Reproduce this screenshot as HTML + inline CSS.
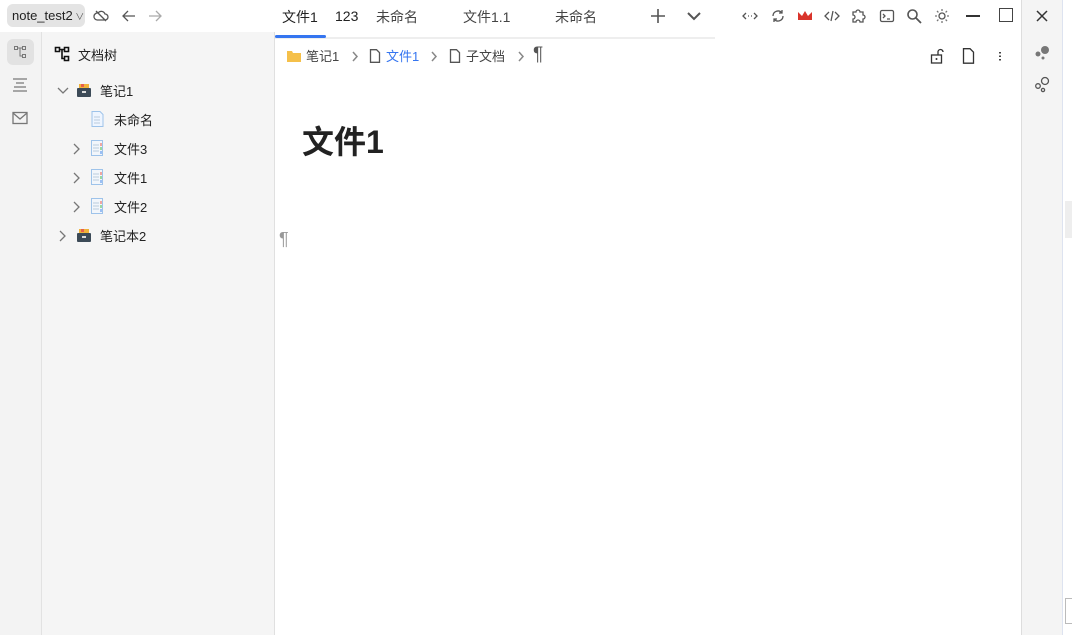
<!DOCTYPE html>
<html><head><meta charset="utf-8"><style>
*{box-sizing:border-box;margin:0;padding:0}
body{width:1072px;height:635px;overflow:hidden;background:#fff;font-family:"Liberation Sans","Noto Sans CJK SC",sans-serif;font-size:13px;color:#222;position:relative}
.a{position:absolute}
.ic{stroke:#555;fill:none;stroke-width:1.3}
</style></head><body>
<div class="a" style="left:0;top:32px;width:42px;height:603px;background:#f3f3f3;border-right:1px solid #e2e2e2"></div>
<div class="a" style="left:42px;top:32px;width:233px;height:603px;background:#f5f5f5;border-right:1px solid #e0e0e0"></div>
<div class="a" style="left:1021px;top:0;width:42px;height:635px;background:#f4f4f4;border-left:1px solid #ddd;border-right:1px solid #dde3f0"></div>
<div class="a" style="left:1065px;top:201px;width:7px;height:37px;background:#eee"></div>
<div class="a" style="left:1065px;top:598px;width:7px;height:26px;border:1px solid #bbb;border-right:none;background:#fff"></div>
<div class="a" style="left:7px;top:4px;width:78px;height:23px;background:#e4e4e4;border-radius:6px;font-size:13px;line-height:23px;padding-left:5px">note_test2<span style="font-size:9px;color:#555"> ∨</span></div>
<svg class="a" style="left:93px;top:8px" width="16" height="16" viewBox="0 0 16 16"><path class="ic" d="M4 12h8a3 3 0 0 0 0-6 4 4 0 0 0-7-1 3 3 0 0 0-1 7M3 3l10 10"/></svg>
<svg class="a" style="left:121px;top:8px" width="16" height="16" viewBox="0 0 16 16"><path class="ic" d="M14 8H2M7 3L2 8l5 5"/></svg>
<svg class="a" style="left:147px;top:8px" width="16" height="16" viewBox="0 0 16 16"><path class="ic" style="stroke:#aaa" d="M2 8h12M9 3l5 5-5 5"/></svg>
<div class="a" style="left:275px;top:37px;width:440px;height:2px;background:#eee"></div>
<div class="a" style="left:275px;top:35px;width:51px;height:3px;background:#3575f0;border-radius:2px"></div>
<div class="a" style="left:282px;top:7px;font-size:14px">文件1</div>
<div class="a" style="left:335px;top:8px;font-size:14px">123</div>
<div class="a" style="left:376px;top:7px;font-size:14px;color:#444">未命名</div>
<div class="a" style="left:463px;top:7px;font-size:14px;color:#444">文件1.1</div>
<div class="a" style="left:555px;top:7px;font-size:14px;color:#444">未命名</div>
<svg class="a" style="left:650px;top:8px" width="16" height="16" viewBox="0 0 16 16"><path class="ic" style="stroke-width:1.6" d="M8 1v14M1 8h14"/></svg>
<svg class="a" style="left:686px;top:8px" width="16" height="16" viewBox="0 0 16 16"><path class="ic" style="stroke-width:2" d="M2 5l6 6 6-6"/></svg>
<svg class="a" style="left:742px;top:9px" width="16" height="14" viewBox="0 0 16 14"><path class="ic" d="M4 4L1 7l3 3M12 4l3 3-3 3M6 7h1M9 7h1"/></svg>
<svg class="a" style="left:770px;top:8px" width="16" height="16" viewBox="0 0 16 16"><path class="ic" d="M3 8a5 5 0 0 1 9-3M13 8a5 5 0 0 1-9 3M12 2v3H9M4 14v-3h3"/></svg>
<svg class="a" style="left:797px;top:9px" width="16" height="14" viewBox="0 0 16 14"><path fill="#d9342b" d="M1 3l4 4 3-5 3 5 4-4v8H1z"/></svg>
<svg class="a" style="left:824px;top:8px" width="16" height="16" viewBox="0 0 16 16"><path class="ic" d="M5 4L1 8l4 4M11 4l4 4-4 4M9 3L7 13"/></svg>
<svg class="a" style="left:851px;top:7px" width="16" height="17" viewBox="0 0 16 17"><path class="ic" d="M2 5h3a2 2 0 1 1 4 0h3v3a2 2 0 1 1 0 4v3H9a2 2 0 1 0-4 0H2v-3a2 2 0 1 0 0-4z"/></svg>
<svg class="a" style="left:879px;top:8px" width="16" height="16" viewBox="0 0 16 16"><rect class="ic" x="1.5" y="2.5" width="13" height="11" rx="1.5"/><path class="ic" d="M4 6l2 2-2 2M8 11h3"/></svg>
<svg class="a" style="left:906px;top:8px" width="16" height="16" viewBox="0 0 16 16"><circle class="ic" style="stroke-width:1.6" cx="6.5" cy="6.5" r="4.5"/><path class="ic" style="stroke-width:1.8" d="M10 10l5 5"/></svg>
<svg class="a" style="left:934px;top:8px" width="16" height="16" viewBox="0 0 16 16"><circle class="ic" cx="8" cy="8" r="3"/><path class="ic" style="stroke:#777" d="M8 1v2M8 13v2M1 8h2M13 8h2M3 3l1.4 1.4M11.6 11.6L13 13M3 13l1.4-1.4M11.6 4.4L13 3"/></svg>
<div class="a" style="left:966px;top:15px;width:14px;height:1.5px;background:#333"></div>
<div class="a" style="left:999px;top:8px;width:14px;height:14px;border:1px solid #444"></div>
<svg class="a" style="left:1035px;top:9px" width="14" height="14" viewBox="0 0 14 14"><path class="ic" style="stroke:#333;stroke-width:1.5" d="M2 2l10 10M12 2L2 12"/></svg>
<svg class="a" style="left:1033px;top:43px" width="18" height="18" viewBox="0 0 18 18"><circle fill="#777" cx="12" cy="7" r="4"/><circle fill="#777" cx="5" cy="11" r="2.5"/><circle fill="#777" cx="10" cy="15" r="1.5"/></svg>
<svg class="a" style="left:1033px;top:75px" width="18" height="18" viewBox="0 0 18 18"><circle class="ic" cx="12" cy="6" r="3.5"/><circle class="ic" cx="5" cy="11" r="2.3"/><circle class="ic" cx="10" cy="15" r="1.6"/></svg>
<div class="a" style="left:7px;top:39px;width:27px;height:26px;background:#e2e2e2;border-radius:6px"></div>
<svg class="a" style="left:13px;top:45px" width="14" height="14" viewBox="0 0 14 14"><path class="ic" style="stroke:#777;stroke-width:1" d="M1.5 1.5h3v3h-3zM9.5 1.5h3v3h-3zM9.5 9.5h3v3h-3zM4.5 3h5M7 3v8h2.5"/></svg>
<svg class="a" style="left:12px;top:78px" width="16" height="14" viewBox="0 0 16 14"><path class="ic" style="stroke:#777" d="M1 1h14M4 5h8M2 9h12M1 13h14"/></svg>
<svg class="a" style="left:12px;top:111px" width="16" height="14" viewBox="0 0 16 14"><rect class="ic" style="stroke:#777" x="1" y="1.5" width="14" height="11"/><path class="ic" style="stroke:#777" d="M1 2l7 6 7-6"/></svg>
<svg class="a" style="left:54px;top:46px" width="16" height="16" viewBox="0 0 16 16"><path fill="none" stroke="#111" stroke-width="1.6" d="M1.5 1.5h4v4h-4zM10.5 1.5h4v4h-4zM10.5 10.5h4v4h-4zM5.5 3.5h5M8 3.5v9h2.5"/></svg>
<div class="a" style="left:78px;top:45px;font-size:13px">文档树</div>
<svg class="a" style="left:57px;top:86px" width="12" height="10" viewBox="0 0 12 10"><path class="ic" style="stroke:#777" d="M1 2l5 5 5-5"/></svg>
<svg class="a" style="left:76px;top:83px" width="16" height="15" viewBox="0 0 16 15"><rect fill="#f0b33a" x="3" y="1" width="10" height="4"/><rect fill="#e85f4a" x="5" y="1" width="3" height="3"/><rect fill="#3c4a57" x="1" y="5" width="14" height="9" rx="1"/><rect fill="#ddd" x="6" y="8" width="4" height="2"/></svg>
<div class="a" style="left:100px;top:81px">笔记1</div>
<svg class="a" style="left:91px;top:111px" width="13" height="16" viewBox="0 0 13 16"><path fill="#eef5ff" stroke="#9ec3ea" d="M1 .5h8l3 3v12H1z"/><path stroke="#bcd" d="M3 6h6M3 9h6M3 12h6"/></svg>
<div class="a" style="left:114px;top:110px">未命名</div>
<svg class="a" style="left:71px;top:143px" width="10" height="12" viewBox="0 0 10 12"><path class="ic" style="stroke:#777" d="M3 1l5 5-5 5"/></svg>
<svg class="a" style="left:91px;top:140px" width="13" height="16" viewBox="0 0 13 16"><path fill="#f2f6fb" stroke="#9ec3ea" d="M.5.5h11v15H.5z"/><path stroke="#bcd" d="M2 5h6M2 8h6M2 11h6"/><path stroke="#e54" d="M10 3v3"/><path stroke="#4b4" d="M10 7v3"/><path stroke="#48e" d="M10 11v3"/></svg>
<div class="a" style="left:114px;top:139px">文件3</div>
<svg class="a" style="left:71px;top:172px" width="10" height="12" viewBox="0 0 10 12"><path class="ic" style="stroke:#777" d="M3 1l5 5-5 5"/></svg>
<svg class="a" style="left:91px;top:169px" width="13" height="16" viewBox="0 0 13 16"><path fill="#f2f6fb" stroke="#9ec3ea" d="M.5.5h11v15H.5z"/><path stroke="#bcd" d="M2 5h6M2 8h6M2 11h6"/><path stroke="#e54" d="M10 3v3"/><path stroke="#4b4" d="M10 7v3"/><path stroke="#48e" d="M10 11v3"/></svg>
<div class="a" style="left:114px;top:168px">文件1</div>
<svg class="a" style="left:71px;top:201px" width="10" height="12" viewBox="0 0 10 12"><path class="ic" style="stroke:#777" d="M3 1l5 5-5 5"/></svg>
<svg class="a" style="left:91px;top:198px" width="13" height="16" viewBox="0 0 13 16"><path fill="#f2f6fb" stroke="#9ec3ea" d="M.5.5h11v15H.5z"/><path stroke="#bcd" d="M2 5h6M2 8h6M2 11h6"/><path stroke="#e54" d="M10 3v3"/><path stroke="#4b4" d="M10 7v3"/><path stroke="#48e" d="M10 11v3"/></svg>
<div class="a" style="left:114px;top:197px">文件2</div>
<svg class="a" style="left:57px;top:230px" width="10" height="12" viewBox="0 0 10 12"><path class="ic" style="stroke:#777" d="M3 1l5 5-5 5"/></svg>
<svg class="a" style="left:76px;top:228px" width="16" height="15" viewBox="0 0 16 15"><rect fill="#f0b33a" x="3" y="1" width="10" height="4"/><rect fill="#e85f4a" x="5" y="1" width="3" height="3"/><rect fill="#3c4a57" x="1" y="5" width="14" height="9" rx="1"/><rect fill="#ddd" x="6" y="8" width="4" height="2"/></svg>
<div class="a" style="left:100px;top:226px">笔记本2</div>
<svg class="a" style="left:287px;top:50px" width="14" height="12" viewBox="0 0 14 12"><path fill="#f5c04a" d="M0 1h5l1 2h8v9H0z"/></svg>
<div class="a" style="left:306px;top:46px;color:#444">笔记1</div>
<svg class="a" style="left:351px;top:51px" width="8" height="11" viewBox="0 0 8 11"><path class="ic" style="stroke:#888;stroke-width:1.5" d="M2 1l4 4.5L2 10"/></svg>
<svg class="a" style="left:369px;top:49px" width="12" height="14" viewBox="0 0 12 14"><path class="ic" d="M1.5.7h6l3 3v9.6h-9z"/></svg>
<div class="a" style="left:386px;top:46px;color:#3575f0">文件1</div>
<svg class="a" style="left:430px;top:51px" width="8" height="11" viewBox="0 0 8 11"><path class="ic" style="stroke:#888;stroke-width:1.5" d="M2 1l4 4.5L2 10"/></svg>
<svg class="a" style="left:449px;top:49px" width="12" height="14" viewBox="0 0 12 14"><path class="ic" d="M1.5.7h6l3 3v9.6h-9z"/></svg>
<div class="a" style="left:466px;top:46px;color:#444">子文档</div>
<svg class="a" style="left:517px;top:51px" width="8" height="11" viewBox="0 0 8 11"><path class="ic" style="stroke:#888;stroke-width:1.5" d="M2 1l4 4.5L2 10"/></svg>
<div class="a" style="left:533px;top:45px;font-size:19px;line-height:20px;color:#555">¶</div>
<svg class="a" style="left:930px;top:48px" width="14" height="16" viewBox="0 0 14 16"><rect class="ic" style="stroke:#333" x="1.5" y="7" width="10" height="8"/><path class="ic" style="stroke:#333" d="M8 7V4a2.5 2.5 0 0 1 5 0"/><circle fill="#333" cx="6.5" cy="11" r="1"/></svg>
<svg class="a" style="left:962px;top:48px" width="13" height="16" viewBox="0 0 13 16"><path class="ic" style="stroke:#333" d="M1.5.7h6.5l3.5 3.5v11h-10z"/></svg>
<div class="a" style="left:999px;top:51px;width:2px;height:10px;background:radial-gradient(circle,#444 45%,transparent 50%) 0 0/2px 3.5px"></div>
<div class="a" style="left:302px;top:117px;font-size:32px;font-weight:bold;color:#222">文件1</div>
<div class="a" style="left:279px;top:229px;font-size:18px;color:#999">¶</div>
</body></html>
